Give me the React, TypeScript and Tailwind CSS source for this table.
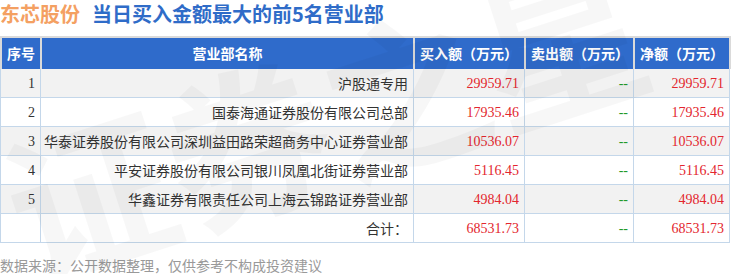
import React from 'react'

interface Row {
  no: string;
  name: string;
  buy: string;
  sell: string;
  net: string;
}

const rows: Row[] = [
  { no: '1', name: '沪股通专用', buy: '29959.71', sell: '--', net: '29959.71' },
  { no: '2', name: '国泰海通证券股份有限公司总部', buy: '17935.46', sell: '--', net: '17935.46' },
  { no: '3', name: '华泰证券股份有限公司深圳益田路荣超商务中心证券营业部', buy: '10536.07', sell: '--', net: '10536.07' },
  { no: '4', name: '平安证券股份有限公司银川凤凰北街证券营业部', buy: '5116.45', sell: '--', net: '5116.45' },
  { no: '5', name: '华鑫证券有限责任公司上海云锦路证券营业部', buy: '4984.04', sell: '--', net: '4984.04' },
  { no: '', name: '合计：', buy: '68531.73', sell: '--', net: '68531.73' },
]

const cell = 'h-full flex items-center justify-end pr-[5px] border-r border-[#c4d7ea] whitespace-nowrap'

const App: React.FC = () => {
  return (
    <div className="relative w-[731px] h-[274px] overflow-hidden bg-white font-['Noto_Sans_CJK_SC',sans-serif]">
      <div className="h-[36px] leading-[27px] text-[20px] font-bold whitespace-nowrap">
        <span className="text-[#f4a062]">东芯股份</span>
        <span className="ml-3 text-[#2f6cc8]">当日买入金额最大的前5名营业部</span>
      </div>

      <div className="flex gap-[2px] bg-[#dadada] pl-[2px] pr-[2px] pt-[2px] w-[731px] text-white text-[14px] font-bold">
        <div className="w-[38px] h-[31px] bg-[#2f6bcb] flex items-center justify-center">序号</div>
        <div className="w-[371px] h-[31px] bg-[#2f6bcb] flex items-center justify-center">营业部名称</div>
        <div className="w-[109px] h-[31px] bg-[#2f6bcb] flex items-center pl-[5px]">买入额（万元）</div>
        <div className="w-[107px] h-[31px] bg-[#2f6bcb] flex items-center pl-[5px]">卖出额（万元）</div>
        <div className="w-[94px] h-[31px] bg-[#2f6bcb] flex items-center pl-[5px]">净额（万元）</div>
      </div>

      <div className="w-[730px] border-l border-[#c4d7ea] text-[14px] text-[#333] font-['Liberation_Serif','Noto_Sans_CJK_SC',serif]">
        {rows.map((r, i) => (
          <div key={i} className={'flex h-[29px] border-b border-[#c4d7ea] ' + (i % 2 === 0 && i < 5 ? 'bg-[#f2f2f2]' : 'bg-white')}>
            <div className={cell + ' w-[40px]'}>{r.no}</div>
            <div className={cell + ' w-[373px] font-["Noto_Sans_CJK_SC",sans-serif]'}>{r.name}</div>
            <div className={cell + ' w-[111px] text-[#e3262e]'}>{r.buy}</div>
            <div className={cell + ' w-[109px] text-[#1f9a2a]'}>{r.sell}</div>
            <div className={cell + ' w-[96px] text-[#e3262e]'}>{r.net}</div>
          </div>
        ))}
      </div>

      <div className="mt-[12px] leading-[20px] text-[14px] text-[#999]">数据来源：公开数据整理，仅供参考不构成投资建议</div>

      {/* watermark */}
      <div className="pointer-events-none absolute left-[10px] top-[135px] origin-[0_50%] -rotate-[18deg] text-[165px] leading-[160px] font-bold text-black/[0.03] whitespace-nowrap select-none">
        证券之星
      </div>
    </div>
  )
}

export default App
